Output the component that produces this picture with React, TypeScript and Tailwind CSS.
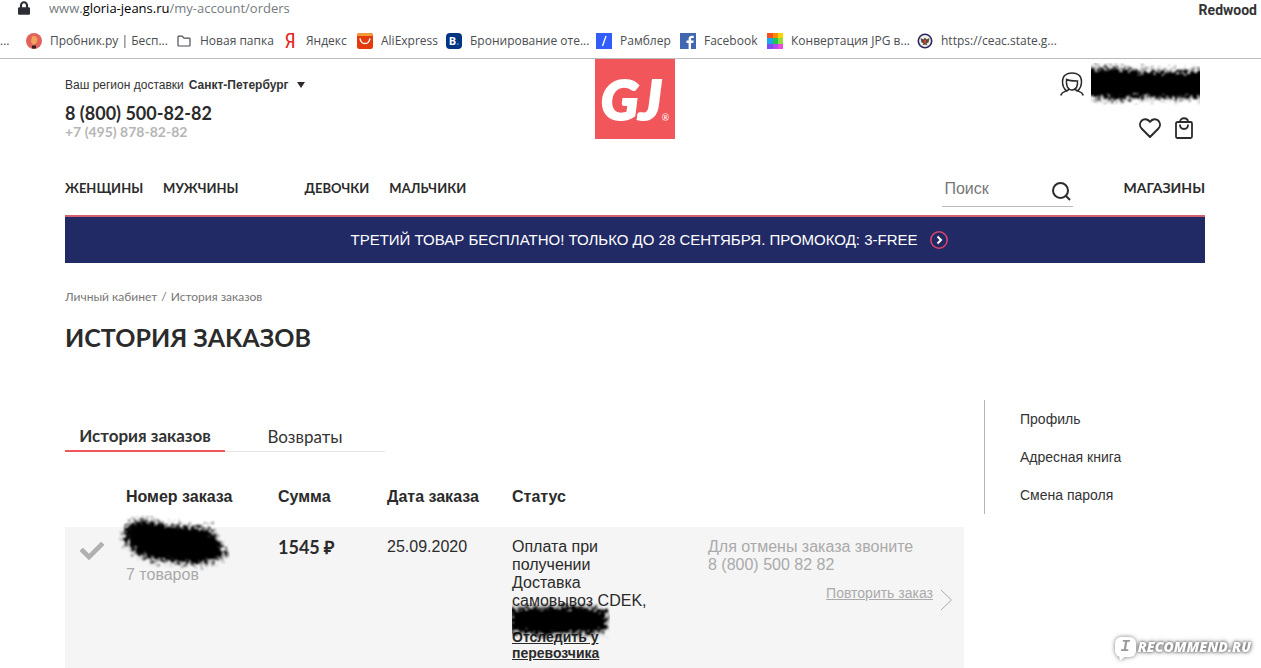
import type { ReactNode } from "react"
import { FaCheck, FaLock } from "react-icons/fa"

const ARIAL = "font-['Liberation_Sans',Arial,sans-serif]"
const BRAND = "font-['Lato','Liberation_Sans',sans-serif]"
const CHROME = "font-['Open_Sans','Noto_Sans',sans-serif]"

const ProbnikIcon = () => (
  <svg viewBox="0 0 16 16" className="size-4">
    <circle cx="8" cy="8" r="8" fill="#e0645c" />
    <path d="M6 3.500l3-.8 2.500 3L10.500 10 7 12 5 9z" fill="#f2a25c" />
    <path d="M6 12.500h4v3H6z" fill="#3b1f24" />
  </svg>
)

const FolderIcon = () => (
  <svg viewBox="0 0 16 16" className="size-4" fill="none" stroke="#4a4d50" strokeWidth="1.2">
    <path d="M2 12.2V4a.8.8 0 0 1 .8-.8h3.4l1.8 2h5.2a.8.8 0 0 1 .8.8v6.2a.8.8 0 0 1-.8.8H2.8a.8.8 0 0 1-.8-.8z" />
  </svg>
)

const AliIcon = () => (
  <svg viewBox="0 0 16 16" className="size-4">
    <rect width="16" height="16" rx="2.5" fill="#e43b0c" />
    <path d="M0 3V2.5A2.5 2.5 0 0 1 2.5 0h11A2.5 2.5 0 0 1 16 2.5V3z" fill="#f29a35" />
    <path d="M3.200 6c1 6 8.600 6 9.600 0" fill="none" stroke="#fff" strokeWidth="1.500" strokeLinecap="round" />
  </svg>
)

const RamblerIcon = () => (
  <svg viewBox="0 0 16 16" className="size-4">
    <rect width="16" height="16" fill="#315efb" />
    <path d="M10 3L6.500 13" stroke="#fff" strokeWidth="1.300" />
  </svg>
)

const FacebookIcon = () => (
  <svg viewBox="0 0 16 16" className="size-4">
    <rect width="16" height="16" fill="#4267b2" />
    <path d="M11 16V10h2.300l.4-2.400H11V6.200c0-.8.3-1.200 1.300-1.200h1.400V2.800C13 2.700 12.400 2.700 11.800 2.700 9.700 2.700 8.600 4 8.600 6v1.600H6.500V10h2.100v6z" fill="#fff" />
  </svg>
)

const ConvertIcon = () => (
  <svg viewBox="0 0 16 16" className="size-4" shapeRendering="crispEdges">
    <path d="M0 0h6v5H0z" fill="#f4511e" />
    <path d="M6 0h5v5H6z" fill="#fb8c00" />
    <path d="M11 0h5v5h-5z" fill="#fdd100" />
    <path d="M0 5h6v6H0z" fill="#19a7f2" />
    <path d="M6 5h5v6H6z" fill="#1fc64d" />
    <path d="M11 5h5v6h-5z" fill="#8fdc3a" />
    <path d="M0 11h6v5H0z" fill="#7c4df0" />
    <path d="M6 11h5v5H6z" fill="#b44af0" />
    <path d="M11 11h5v5h-5z" fill="#f04be0" />
  </svg>
)

const SealIcon = () => (
  <svg viewBox="0 0 16 16" className="size-4">
    <circle cx="8" cy="8" r="6.700" fill="#f1efe9" stroke="#2c2862" strokeWidth="1.600" />
    <path d="M3.500 5l3 1.500L8 4.500l1.500 2 3-1.500-1 4.500-2 .8 1 2-2.500-.8-2.500.8 1-2-2-.8z" fill="#5b4636" />
    <path d="M6.800 7h2.400v2.600L8 10.500 6.800 9.600z" fill="#c8473f" />
  </svg>
)

const BOOKMARKS: { label: string; icon: ReactNode; width: string }[] = [
  { label: "Пробник.ру | Бесп...", icon: <ProbnikIcon />, width: "w-[150px]" },
  { label: "Новая папка", icon: <FolderIcon />, width: "w-[106px]" },
  {
    label: "Яндекс",
    icon: (
      <span className="flex w-4 justify-center font-['Roboto_Condensed','Roboto',sans-serif] text-xl leading-4 text-[#e52620]">
        Я
      </span>
    ),
    width: "w-[75px]",
  },
  { label: "AliExpress", icon: <AliIcon />, width: "w-[89px]" },
  {
    label: "Бронирование оте...",
    icon: (
      <span className="flex size-4 items-center justify-center rounded-sm bg-[#003580] text-[11px] font-bold text-white">
        B<span className="text-[#2aa5e8]">.</span>
      </span>
    ),
    width: "w-[150px]",
  },
  { label: "Рамблер", icon: <RamblerIcon />, width: "w-[84px]" },
  { label: "Facebook", icon: <FacebookIcon />, width: "w-[87px]" },
  { label: "Конвертация JPG в...", icon: <ConvertIcon />, width: "w-[150px]" },
  { label: "https://ceac.state.g...", icon: <SealIcon />, width: "w-[150px]" },
]

const BrowserBar = () => (
  <div className={`${CHROME} border-b border-[#b9bdc0]`}>
    <div className="flex h-5 items-start justify-between pr-1 pl-[18px]">
      <div className="flex items-center gap-[19px]">
        <FaLock className="h-[14px] w-3 text-[#2b2f33]" />
        <span className="text-[13px] leading-4 text-[#757b80]">
          www.<span className="text-black">gloria-jeans.ru</span>/my-account/orders
        </span>
      </div>
      <span className="font-['Roboto',sans-serif] text-sm leading-5 font-bold text-[#333]">Redwood</span>
    </div>
    <nav className="flex h-[38px] items-center pt-1 text-xs whitespace-nowrap text-[#4a4d50]">
      <span className="w-[26px]">...</span>
      {BOOKMARKS.map(({ label, icon, width }) => (
        <a key={label} href="#" className={`flex shrink-0 items-center gap-2 ${width}`}>
          {icon}
          {label}
        </a>
      ))}
    </nav>
  </div>
)

type ScribbleProps = {
  id: string
  path: string
  viewBox: string
  className: string
}

// Marker strokes over private data: solid core, ragged grey edges
const Scribble = ({ id, path, viewBox, className }: ScribbleProps) => (
  <svg viewBox={viewBox} className={className} aria-hidden="true">
    <filter id={id} x="-10%" y="-20%" width="120%" height="140%">
      <feTurbulence type="fractalNoise" baseFrequency="0.3" numOctaves="3" seed="4" />
      <feDisplacementMap in="SourceGraphic" scale="16" xChannelSelector="R" yChannelSelector="G" />
      <feGaussianBlur stdDeviation="0.8" />
    </filter>
    <g filter={`url(#${id})`}>
      <path d={path} fill="none" stroke="#000" strokeOpacity="0.5" strokeWidth="7" strokeDasharray="3 1 1 2" />
      <path d={path} fill="#000" />
    </g>
  </svg>
)

const UserIcon = () => (
  <svg viewBox="0 0 24 24" className="size-6" fill="none" stroke="#2b2b2b" strokeWidth="1.500" strokeLinecap="round">
    <path d="M1 23c.5-2.500 3-3.200 5.500-4.200C3.500 16.500 2.500 13 2.500 9.500 2.500 4 6.500 1 12 1s9.500 3 9.500 8.500c0 3.500-1 7-4 9.300C20 19.800 22.500 20.500 23 23" />
    <path d="M6.500 18.800c1.500-.3 2.300-1.300 2.300-2.300M17.500 18.800c-1.500-.3-2.300-1.300-2.300-2.300" />
    <path d="M6.500 7.500c3 1.500 6.500 1.500 11 1.500.3 4.500-.8 9-5.500 9s-6-5-5.500-10.500z" />
  </svg>
)

const HeartIcon = () => (
  <svg viewBox="0 0 22 20" className="h-5 w-[22px]" fill="none" stroke="#2b2b2b" strokeWidth="2" strokeLinejoin="round">
    <path d="M11 19L2.800 10.800C.5 8.500.5 5 2.500 2.800 4.800.5 8.500.5 11 3.800c2.500-3.300 6.200-3.300 8.500-1 2 2.200 2 5.700-.3 8z" />
  </svg>
)

const BagIcon = () => (
  <svg viewBox="0 0 18 22" className="h-[22px] w-[18px]" fill="none" stroke="#2b2b2b" strokeWidth="1.800">
    <rect x="1" y="5" width="16" height="16" rx="1.500" />
    <path d="M5 5c0-5 8-5 8 0M5 7.500c0 6 8 6 8 0" />
  </svg>
)

const SearchIcon = () => (
  <svg viewBox="0 0 19 19" className="size-[19px]" fill="none" stroke="#2b2b2b" strokeWidth="2">
    <circle cx="8.500" cy="8.500" r="7.500" />
    <path d="M13.500 13.500L18 18" />
  </svg>
)

const Header = () => (
  <header>
    <div className="grid h-[110px] grid-cols-[1fr_auto_1fr] items-start">
      <div className="pt-[17px]">
        <button type="button" className="flex items-center gap-[5px] text-xs leading-[18px] text-[#333]">
          Ваш регион доставки
          <span className="font-bold">Санкт-Петербург</span>
          <svg viewBox="0 0 8 6" className="ml-1 h-1.5 w-2">
            <path d="M0 0h8L4 6z" fill="#2b2b2b" />
          </svg>
        </button>
        <div className={`${BRAND} pt-2 font-bold`}>
          <a href="tel:88005008282" className="block text-lg leading-[22px] text-[#2b2b2b]">
            8 (800) 500-82-82
          </a>
          <a href="tel:+74958788282" className="block text-sm leading-4 text-[#b5b5b5]">
            +7 (495) 878-82-82
          </a>
        </div>
      </div>

      <a
        href="#"
        aria-label="Gloria Jeans"
        className={`${BRAND} flex size-20 items-center justify-center bg-[#f0565a] text-[56px] leading-none font-black text-white italic`}
      >
        <span className="[-webkit-text-stroke:2px_white]">GJ</span>
        <span className="mt-9 text-[9px] font-normal not-italic">®</span>
      </a>

      <div className="flex flex-col items-end gap-3 pt-1">
        <a href="#" aria-label="Личный кабинет" className="flex items-center gap-[7px] pr-[5px]">
          <UserIcon />
          <Scribble
            id="scribble-name"
            viewBox="0 0 109 42"
            className="h-[42px] w-[109px]"
            path="M-4 6L30 6L46 9L60 9L115 9V34L60 34L40 34L25 37L12 34L-4 33z"
          />
        </a>
        <div className="flex items-center gap-[14px] pr-3">
          <button type="button" aria-label="Избранное">
            <HeartIcon />
          </button>
          <button type="button" aria-label="Корзина">
            <BagIcon />
          </button>
        </div>
      </div>
    </div>

    <div className="flex h-[46px] items-start justify-between">
      <nav className={`${BRAND} flex gap-5 pt-[9px] text-[13px] leading-5 font-bold text-[#2b2b2b]`}>
        <a href="#">ЖЕНЩИНЫ</a>
        <a href="#">МУЖЧИНЫ</a>
        <a href="#" className="pl-[46px]">
          ДЕВОЧКИ
        </a>
        <a href="#">МАЛЬЧИКИ</a>
      </nav>
      <div className="flex items-start gap-[50px]">
        <form className="flex h-[38px] w-[131px] items-center justify-between border-b border-[#bbb] px-0.5 pt-0.5">
          <input
            type="search"
            aria-label="Поиск"
            placeholder="Поиск"
            className="w-20 text-base leading-5 outline-none placeholder:text-[#777]"
          />
          <button type="button" aria-label="Найти" className="pt-1.5">
            <SearchIcon />
          </button>
        </form>
        <a href="#" className={`${BRAND} pt-[9px] text-sm leading-5 font-bold text-[#2b2b2b]`}>
          МАГАЗИНЫ
        </a>
      </div>
    </div>
  </header>
)

const PromoBanner = () => (
  <a
    href="#"
    className="flex h-12 items-center justify-center gap-3 border-t-2 border-[#d5606f] bg-[#222a66] pl-7 text-[15px] text-white"
  >
    ТРЕТИЙ ТОВАР БЕСПЛАТНО! ТОЛЬКО ДО 28 СЕНТЯБРЯ. ПРОМОКОД: 3-FREE
    <svg viewBox="0 0 18 18" className="size-[18px]" fill="none">
      <circle cx="9" cy="9" r="8.200" stroke="#e0446a" strokeWidth="1.500" />
      <path d="M7.500 5.500L11 9l-3.500 3.500" stroke="#fff" strokeWidth="2" />
    </svg>
  </a>
)

const OrdersTable = () => (
  <table className="mt-9 w-full table-fixed text-left text-base leading-[18px] text-[#2b2b2b]">
    <colgroup>
      <col className="w-[61px]" />
      <col className="w-[152px]" />
      <col className="w-[109px]" />
      <col className="w-[125px]" />
      <col className="w-[196px]" />
      <col />
    </colgroup>
    <thead>
      <tr className="h-[39px] align-top">
        <td />
        <th scope="col">Номер заказа</th>
        <th scope="col">Сумма</th>
        <th scope="col">Дата заказа</th>
        <th scope="col">Статус</th>
        <td />
      </tr>
    </thead>
    <tbody>
      <tr className="bg-[#f5f5f5] align-top">
        <td className="pt-3 pl-[15px]">
          <FaCheck className="size-6 text-[#b0b0b0]" />
        </td>
        <td className="relative pt-[39px] text-[#aaa]">
          7 товаров
          <Scribble
            id="scribble-number"
            viewBox="0 0 112 56"
            className="absolute -top-3 -left-2 h-14 w-28"
            path="M14 8L28 5L42 10L60 12L90 14L97 22L107 38L98 45L80 48L52 46L34 44L18 38L7 25L8 14z"
          />
        </td>
        <td className={`${BRAND} pt-[11px] text-lg leading-[18px] font-bold`}>1545 ₽</td>
        <td className="pt-[11px]">25.09.2020</td>
        <td className="relative pt-[11px] pb-2">
          <p className="w-[140px]">
            Оплата при получении Доставка самовывоз CDEK,
          </p>
          <a href="#" className="mt-[19px] block w-[100px] text-sm leading-4 font-bold underline">
            Отследить у перевозчика
          </a>
          <Scribble
            id="scribble-address"
            viewBox="0 0 98 38"
            className="absolute top-[76px] left-0 h-[38px] w-[98px]"
            path="M-2 6L28 5L62 4L78 5L94 8L94 27L80 30L55 30L35 32L14 30L-2 29z"
          />
        </td>
        <td className="pt-[11px] text-[#aaa]">
          <p>
            Для отмены заказа звоните
            <br />8 (800) 500 82 82
          </p>
          <div className="flex items-start justify-end gap-2 pt-[9px] pr-3">
            <a href="#" className="text-sm leading-5 underline">
              Повторить заказ
            </a>
            <svg viewBox="0 0 11 22" className="mt-1.5 h-[22px] w-[11px]" fill="none" stroke="#aaa">
              <path d="M0 1l10.500 10L0 21" />
            </svg>
          </div>
        </td>
      </tr>
    </tbody>
  </table>
)

const Watermark = () => (
  <div className="absolute right-2.5 bottom-2.5 flex items-center gap-0.5 text-white drop-shadow-[0_0_2px_#777]">
    <span className="relative flex h-5 w-[21px] items-center justify-center rounded-md bg-white font-['Liberation_Mono',monospace] text-base font-bold text-[#999] italic">
      I
      <svg viewBox="0 0 8 6" className="absolute top-[18px] left-1 h-1.5 w-2" fill="#fff">
        <path d="M0 0h8L1 6z" />
      </svg>
    </span>
    <span className="font-['Open_Sans',sans-serif] text-sm leading-6 font-extrabold italic drop-shadow-[0_0_1px_#777]">
      RECOMMEND.RU
    </span>
  </div>
)

const App = () => {
  return (
    <div className={`${ARIAL} relative min-h-screen w-full overflow-hidden bg-white`}>
      <BrowserBar />
      <div className="pr-14 pl-[65px]">
        <Header />
        <PromoBanner />
        <nav className={`${BRAND} flex gap-1 pt-[25px] text-xs leading-[18px] text-[#777]`}>
          <a href="#">Личный кабинет</a>
          <span>/</span>
          <span>История заказов</span>
        </nav>
        <h1 className={`${BRAND} pt-[15px] pb-px text-[25px] leading-8 font-bold text-[#2b2b2b]`}>ИСТОРИЯ ЗАКАЗОВ</h1>

        <div className="flex items-start pt-[46px]">
          <main className="min-w-0 flex-1 pt-[22px]">
            <div className={`${BRAND} flex items-start text-[17px] leading-6 text-[#333]`} role="tablist">
              <button
                type="button"
                role="tab"
                aria-selected="true"
                className="h-[30px] w-40 border-b-2 border-[#f0565a] font-bold"
              >
                История заказов
              </button>
              <button type="button" role="tab" aria-selected="false" className="h-[30px] w-40 border-b border-[#e5e5e5]">
                Возвраты
              </button>
            </div>
            <OrdersTable />
          </main>
          <aside className="ml-5 w-[221px] border-l border-[#b5b5b5] pl-[35px] text-sm text-[#333]">
            <nav className="flex flex-col leading-[38px]">
              <a href="#">Профиль</a>
              <a href="#">Адресная книга</a>
              <a href="#">Смена пароля</a>
            </nav>
          </aside>
        </div>
      </div>
      <Watermark />
    </div>
  )
}

export default App
